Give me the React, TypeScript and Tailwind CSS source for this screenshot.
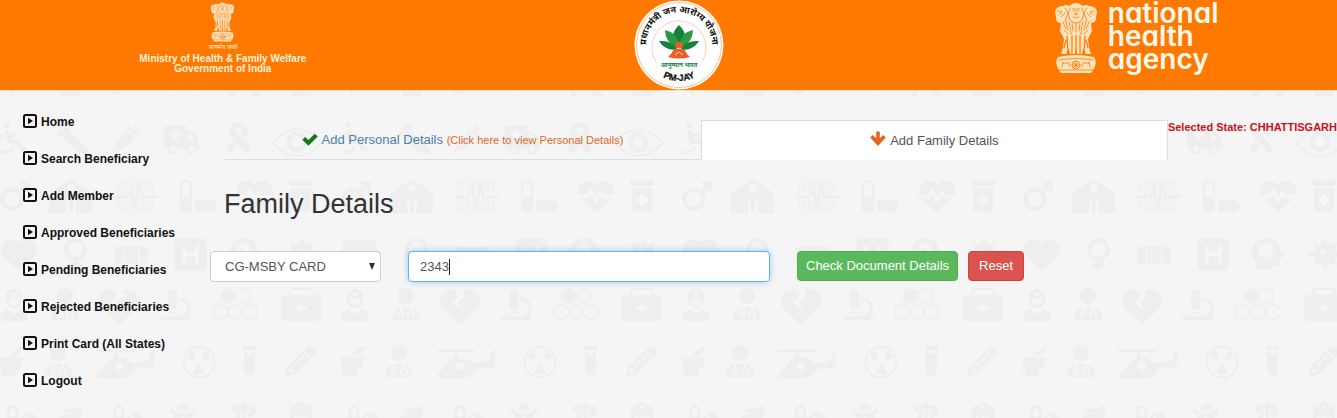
import { useEffect, useRef, useState } from "react";
import {
  FaWheelchair, FaSyringe, FaRibbon, FaMars, FaVenus, FaHospital, FaHeartPulse, FaHeart, FaPrescriptionBottleMedical,
  FaBandage, FaSquareH, FaHeadSideVirus, FaVirus, FaUserNurse, FaUserDoctor, FaHeartCrack, FaMicroscope,
  FaMortarPestle, FaPencil, FaLeaf, FaPills, FaBug, FaStaffSnake, FaClipboardList, FaTruckMedical,
} from "react-icons/fa6";

const watermark = [
  { Icon: FaWheelchair, x: -5, y: 122, size: 32 },
  { Icon: FaSyringe, x: 112, y: 125, size: 28 },
  { Icon: FaTruckMedical, x: 164, y: 122, size: 36 },
  { Icon: FaRibbon, x: 223, y: 122, size: 31 },
  { Icon: FaMars, x: -2, y: 179, size: 34 },
  { Icon: FaHeartPulse, x: 237, y: 178, size: 36 },
  { Icon: FaPrescriptionBottleMedical, x: 285, y: 180, size: 32 },
  { Icon: FaHeart, x: 1, y: 236, size: 36 },
  { Icon: FaVenus, x: 59, y: 238, size: 33 },
  { Icon: FaBandage, x: 114, y: 238, size: 34 },
  { Icon: FaSquareH, x: 172, y: 236, size: 37 },
  { Icon: FaHeadSideVirus, x: 229, y: 238, size: 32 },
  { Icon: FaVirus, x: 286, y: 238, size: 32 },
  { Icon: FaUserNurse, x: -2, y: 289, size: 32 },
  { Icon: FaUserDoctor, x: 49, y: 288, size: 32 },
  { Icon: FaHeartCrack, x: 99, y: 286, size: 40 },
  { Icon: FaMicroscope, x: 160, y: 289, size: 31 },
  { Icon: FaMortarPestle, x: -6, y: 346, size: 30 },
  { Icon: FaUserDoctor, x: 42, y: 345, size: 32 },
  { Icon: FaPencil, x: 285, y: 346, size: 31 },
  { Icon: FaPills, x: 7, y: 402, size: 30 },
  { Icon: FaLeaf, x: 56, y: 403, size: 26 },
  { Icon: FaPills, x: 113, y: 402, size: 30 },
  { Icon: FaBug, x: 168, y: 403, size: 30 },
  { Icon: FaStaffSnake, x: 228, y: 402, size: 32 },
  { Icon: FaClipboardList, x: 286, y: 402, size: 30 },
];

function Watermark() {
  return (
    <svg aria-hidden="true" className="h-full w-full text-[#eeeeee] [grid-area:1/1]">
      <defs>
        <pattern id="medical" width="341" height="456" y="-91" patternUnits="userSpaceOnUse" fill="currentColor">
          {watermark.map(({ Icon, x, y, size }, i) => (
            <Icon key={i} x={x} y={y} size={size} />
          ))}
          {/* lower edge of the row hidden by the header */}
          <path d="M8 90h5l-2 7zM61 90h20v6H61zM109 90h15q-7 9-15 0zM229 90h8l-2 6h-6zM250 91h9l3 5h-9zM291 90h20v6h-20z" />
          <circle cx="174" cy="93" r="3" fill="none" stroke="currentColor" />
          <circle cx="195" cy="93" r="3" fill="none" stroke="currentColor" />
          {/* tilted tube */}
          <path d="M66 123l5 4-2 4 20 18q2 3-2 5l-8-1-18-17-5 1q2-9 10-14z" />
          {/* eye */}
          <path d="M273 143q24-28 49 0q-25 26-49 0z" fill="none" stroke="currentColor" strokeWidth="2" />
          <circle cx="297" cy="142" r="8" fill="none" stroke="currentColor" strokeWidth="5" />
          {/* hospital */}
          <path d="M49 194l9-7 13-7 13 7 8 7v19H76v-13h-3v13h-4v-13h-3v13H49z" />
          <circle cx="71" cy="188" r="4" fill="#f5f5f5" />
          <path d="M52 199h11M52 204h11M52 209h11M79 199h11M79 204h11M79 209h11" stroke="#f5f5f5" strokeDasharray="3 1" />
          {/* cardiogram grid */}
          <path d="M117 180v32M122 180v32M127 180v32M132 180v32M137 180v32M142 180v32M147 180v32M152 180v32M117 181h37M117 186h37M117 191h37M117 201h37M117 206h37M117 211h37" fill="none" stroke="currentColor" />
          <path d="M113 197h14l4-8 4 18 4-21 4 11h15" fill="none" stroke="currentColor" strokeWidth="3" />
          {/* capsules */}
          <rect x="181" y="181" width="10" height="31" rx="5" fill="none" stroke="currentColor" strokeWidth="2.500" />
          <path d="M180 197h12v14q-6 4-12 0zM195 200h16a6 6 0 0 1 0 12h-16z" />
          {/* benzene rings */}
          <path d="M228 288l7 4v8l-7 4-7-4v-8z" />
          <path d="M243 288l7 4v8l-7 4-7-4v-8zM220 304l7 4v8l-7 4-7-4v-8zM235 304l7 4v8l-7 4-7-4v-8zM250 304l7 4v8l-7 4-7-4v-8z" fill="none" stroke="currentColor" strokeWidth="1.500" />
          {/* first-aid case */}
          <rect x="290" y="289" width="22" height="12" rx="3" fill="none" stroke="currentColor" strokeWidth="2.500" />
          <rect x="281" y="295" width="40" height="26" rx="3" />
          <path d="M301 302v12M295 308h12" stroke="#f5f5f5" strokeWidth="3" />
          {/* helicopter */}
          <path d="M96 350h38v2h-17v5q9 0 14 6l17-2 4-11h3l-2 18-18 1q-3 8-12 9H97q-2-4 6-10 5-9 11-11v-5H96z" />
          <circle cx="119" cy="366" r="4" fill="#f5f5f5" />
          {/* radiation */}
          <circle cx="199" cy="362" r="15.500" fill="none" stroke="currentColor" strokeWidth="2" />
          <path d="M196 360l-9-2q1-6 6-8zM202 360l9-2q-1-6-6-8zM197 365l-4 8q6 3 12 0l-4-8z" />
          {/* test tube */}
          <path d="M243 346h13v4h-1v22q-5 8-11 0v-22h-1z" />
          <path d="M246 350h7v4h-7z" fill="#f5f5f5" />
        </pattern>
      </defs>
      <rect width="100%" height="100%" fill="url(#medical)" />
    </svg>
  );
}

function Emblem({ className }: { className: string }) {
  return (
    <svg viewBox="0 0 44 72" className={className} aria-label="National emblem" role="img">
      <g fill="#ffe3bd">
        <path d="M15 4Q22-2 29 4q3-2 6 0 6 0 8 5l-1 7q0 5-5 5l1 8-4 8 1 8 2 7h-5l-3-5-1 5h-5l-1-7-1 7h-5l-1-5-3 5H7l2-7 1-8-4-8 1-8q-5 0-5-5L1 9q2-5 8-5 3-2 6 0z" />
        <path d="M4 55q18-4 36 0 4 6-1 13l-2 3H7l-2-3Q0 61 4 55z" />
      </g>
      <g fill="none" stroke="#ff7900" strokeWidth="0.8" strokeLinecap="round">
        <path d="M16 6q-3 6 0 12 6 6 12 0 3-6 0-12M18 7h3M23 7h3M19 9h1M24 9h1M22 8v5M19 15q3 2 6 0M20 12h4" />
        <path d="M4 9l4 1-3 3M7 15l4-4M11 6l3 5-3 8M40 9l-4 1 3 3M37 15l-4-4M33 6l-3 5 3 8" />
        <path d="M9 20l3 7M12 19l2 9M15 20l2 8M18 21l1 8M22 21v9M26 21l-1 8M29 20l-2 8M32 19l-2 9M35 20l-3 7M10 28l4 4M16 29l2 4M28 29l-2 4M34 28l-4 4" />
        <path d="M13 34l1 16M18 34v18M22 33v19M26 34v18M31 34l-1 16M10 46l2-8M34 46l-2-8" strokeWidth="1.2" />
        <path d="M5 58q17-3 34 0M6 68h32" />
        <circle cx="22" cy="63" r="4" />
        <path d="M22 59v8M18 63h8M19 60l6 6M25 60l-6 6M8 65l1-4h6l1 4M10 62l-2-2M36 65l-1-4h-6l-1 4M34 62l2-2" />
      </g>
    </svg>
  );
}

function PmjayLogo() {
  return (
    <svg viewBox="0 0 90 90" className="size-[90px]" role="img" aria-label="PM-JAY">
      <defs>
        <path id="ring-top" d="M21 68A33 33 0 1 1 69 68" />
        <path id="ring-bottom" d="M9 45A36 36 0 0 0 81 45" />
      </defs>
      <circle cx="45" cy="45" r="44.500" fill="#fff" />
      <circle cx="45" cy="45" r="42.500" fill="none" stroke="#ff9a45" strokeWidth="0.600" />
      <path d="M22 62A27 27 0 1 1 68 62" fill="none" stroke="#f4a9a0" strokeWidth="0.600" />
      <text fill="#111" fontSize="9" fontWeight="700" fontFamily="Noto Sans Devanagari, Noto Sans, sans-serif" textAnchor="middle">
        <textPath href="#ring-top" startOffset="50%">प्रधानमंत्री जन आरोग्य योजना</textPath>
      </text>
      <path d="M45 25q-11 11-3 22h6q8-11-3-22z" fill="#16803a" />
      <path d="M31 30q0 12 12 18l1-3q0-12-13-15zM59 30q0 12-12 18l-1-3q0-12 13-15z" fill="#2b9a45" />
      <path d="M25 41q7 11 18 8-5-9-18-8zM65 41q-7 11-18 8 5-9 18-8z" fill="#16803a" />
      <circle cx="45" cy="45" r="3.500" fill="#f15a24" />
      <path d="M40 49h10l3 5 3 3q-11 3-22 0l3-3z" fill="#f15a24" />
      <path d="M41 55l4-3 4 3" fill="none" stroke="#fff" strokeWidth="0.800" />
      <text x="45" y="67" fill="#16803a" fontSize="6" fontWeight="700" fontFamily="Noto Sans Devanagari, Noto Sans, sans-serif" textAnchor="middle">
        आयुष्मान भारत
      </text>
      <text fill="#111" stroke="#111" strokeWidth="0.300" fontSize="9" fontWeight="700" fontFamily="Liberation Sans, sans-serif" textAnchor="middle">
        <textPath href="#ring-bottom" startOffset="50%">PM-JAY</textPath>
      </text>
    </svg>
  );
}

const menu = [
  "Home", "Search Beneficiary", "Add Member", "Approved Beneficiaries",
  "Pending Beneficiaries", "Rejected Beneficiaries", "Print Card (All States)", "Logout",
];

export default function App() {
  const cardNumber = useRef<HTMLInputElement>(null);
  const [untouched, setUntouched] = useState(true);

  useEffect(() => {
    const input = cardNumber.current;
    if (input) {
      input.focus();
      input.setSelectionRange(input.value.length, input.value.length);
    }
  }, []);

  return (
    <div className="flex min-h-screen flex-col bg-[#f5f5f5] font-['Liberation_Sans',Arial,sans-serif] text-[13px] text-[#555]">
      <header className="grid h-[90px] grid-cols-3 bg-[#ff7900]">
        <div className="flex flex-col items-center pt-0.5 text-center text-[10px] leading-[10px] font-bold text-[#fff0d8]">
          <Emblem className="h-10 w-[27px]" />
          <span className="text-[6px] leading-[10px] font-normal">सत्यमेव जयते</span>
          <p className="pt-0.5">Ministry of Health &amp; Family Welfare<br />Government of India</p>
        </div>
        <div className="flex justify-center pl-[22px]">
          <PmjayLogo />
        </div>
        <div className="flex items-start justify-center gap-2.5 pl-11 text-white">
          <Emblem className="mt-0.5 h-[72px] w-11" />
          <p className="pt-0.5 text-[28px] leading-[23px] font-semibold text-[#fff8ea] font-['Inter',sans-serif] [font-feature-settings:'cv11']">
            national<br />health<br />agency
          </p>
        </div>
      </header>

      <div className="grid flex-1 border-t border-[#ffdcb8]">
        <Watermark />
        <div className="flex items-start [grid-area:1/1]">
          <nav className="w-[210px] shrink-0 pt-3 pl-[23px]">
            <ul>
              {menu.map((item) => (
                <li key={item}>
                  <a href="#" className="flex h-[37px] items-center gap-1 text-[12px] font-bold whitespace-nowrap text-[#111]">
                    <svg viewBox="0 0 14 14" className="mb-0.5 size-3.5" aria-hidden="true">
                      <rect x="1" y="1" width="12" height="12" rx="1.500" fill="none" stroke="currentColor" strokeWidth="2" />
                      <path d="M5 3.800v6.400L10 7z" fill="currentColor" />
                    </svg>
                    {item}
                  </a>
                </li>
              ))}
            </ul>
          </nav>

          <main className="min-w-0 flex-1 pt-[29px]">
            <div className="ml-3.5 grid h-10 grid-cols-[478fr_468fr]">
              <a href="#" className="flex items-center justify-center gap-1 border-b border-[#ddd] text-[#4a80b0]">
                <svg viewBox="0 0 16 13" className="h-[13px] w-4" aria-hidden="true">
                  <path d="M0.300 6.800L3.200 3.900l3.200 3.200L12.800 0.700l2.900 2.900-9.300 9.200z" fill="#14791b" />
                </svg>
                <span>Add Personal Details <span className="text-[11px] text-[#e2662b]">(Click here to view Personal Details)</span></span>
              </a>
              <a href="#" aria-current="page" className="flex items-center justify-center gap-1 border border-b-0 border-[#ddd] bg-white">
                <svg viewBox="0 0 16 16" className="mb-1 size-4" aria-hidden="true">
                  <path d="M6.200 0.500h3.600v6.800l3.600-3.300 2.300 2.400L8 15 0.300 6.400 2.600 4l3.600 3.300z" fill="#e8641e" />
                </svg>
                Add Family Details
              </a>
            </div>

            <h1 className="pt-7 pl-3.5 text-[27px] leading-8 text-[#333]">Family Details</h1>

            <form className="flex items-start pt-[31px]" onSubmit={(e) => e.preventDefault()}>
              <div className="grid w-[171px] shrink-0 items-center">
                <select aria-label="Card type" className="h-[31px] w-full appearance-none rounded border border-[#ccc] bg-white px-3.5 [grid-area:1/1]">
                  <option>CG-MSBY CARD</option>
                </select>
                <svg viewBox="0 0 6 7" className="pointer-events-none mr-1.5 h-[7px] w-1.5 justify-self-end [grid-area:1/1]" aria-hidden="true">
                  <path d="M0 0h6L3 7z" fill="#333" />
                </svg>
              </div>
              <div className="relative ml-[27px] w-full max-w-[362px] min-w-0">
                <input
                  ref={cardNumber}
                  aria-label="Card number"
                  defaultValue="2343"
                  onKeyDown={() => setUntouched(false)}
                  onBlur={() => setUntouched(false)}
                  className="h-[31px] w-full rounded border border-[#66afe9] bg-white px-[11px] shadow-[0_0_6px_rgba(102,175,233,0.6)] outline-none"
                />
                {untouched && <span className="pointer-events-none absolute top-2 left-[41px] h-4 w-px bg-[#222]" />}
              </div>
              <button type="submit" className="ml-[27px] h-[30px] shrink-0 rounded border border-[#4cae4c] bg-[#5cb85c] px-2 text-white">
                Check Document Details
              </button>
              <button type="reset" className="ml-2.5 h-[30px] shrink-0 rounded border border-[#d43f3a] bg-[#d9534f] px-2.5 text-white">
                Reset
              </button>
            </form>
          </main>

          <p className="shrink-0 pt-[30px] text-[11px] leading-3 font-bold text-[#d01020]">
            Selected State: CHHATTISGARH
          </p>
        </div>
      </div>
    </div>
  );
}
